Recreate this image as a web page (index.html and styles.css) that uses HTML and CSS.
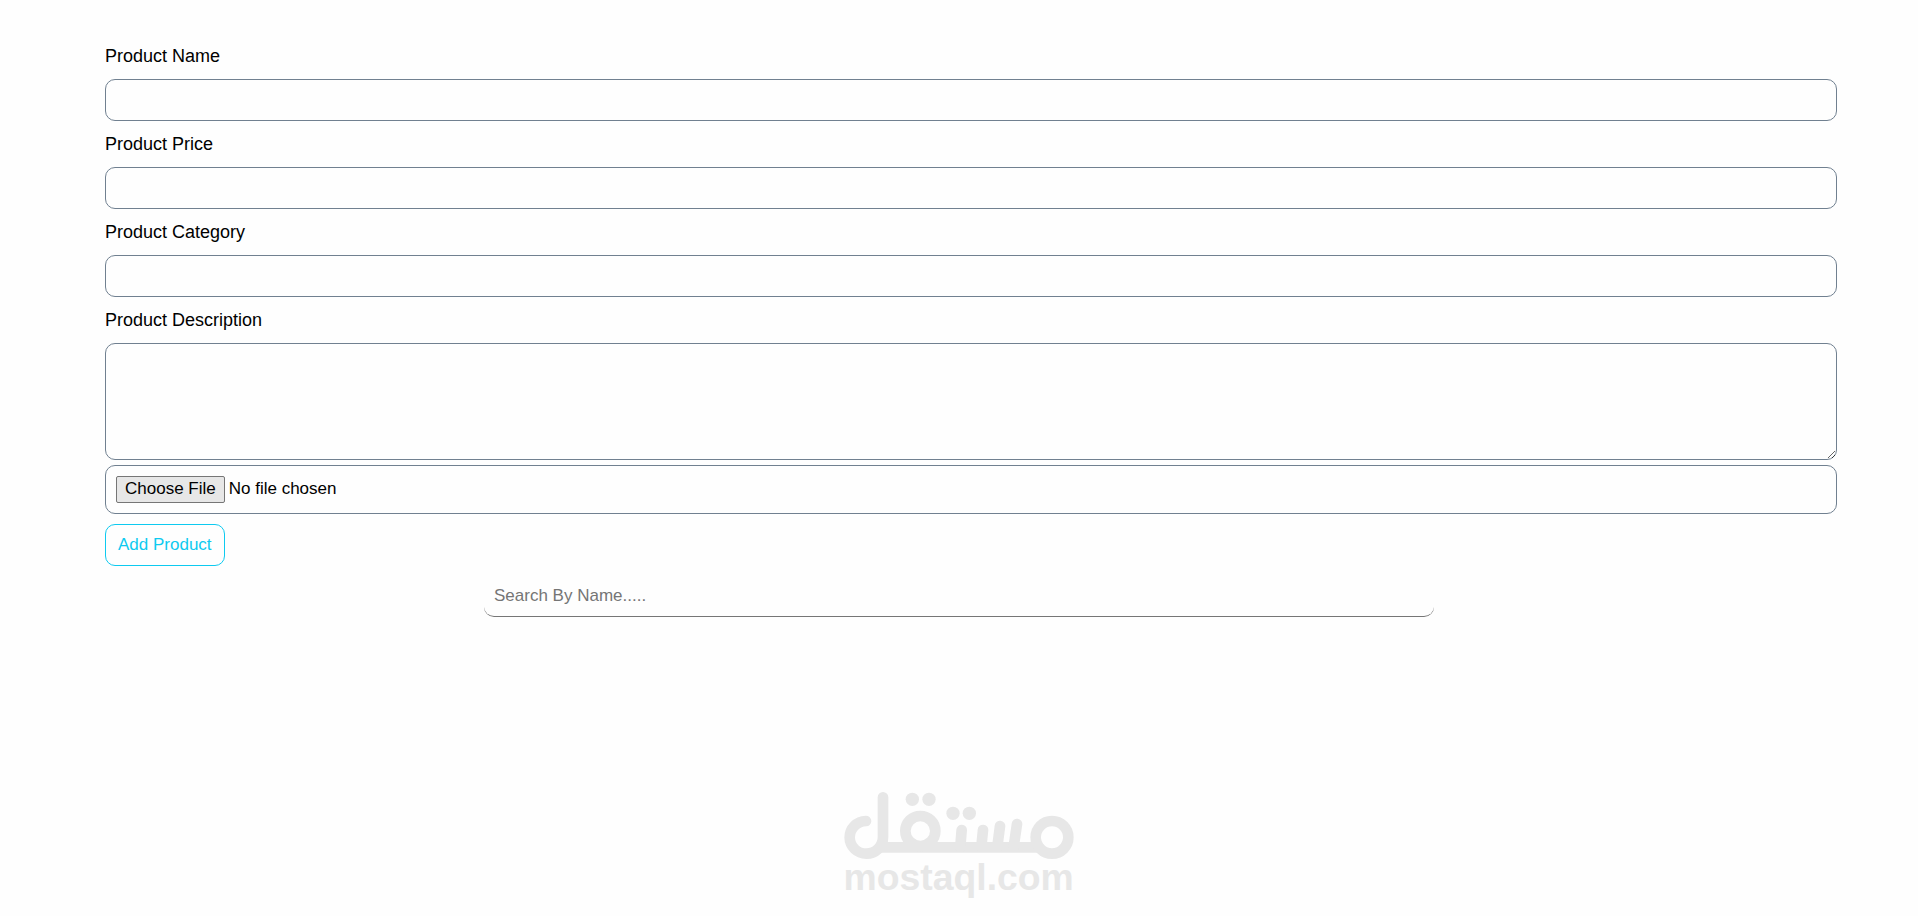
FILE: index.html
```html
<!DOCTYPE html>
<html lang="en">
<head>
    <meta charset="UTF-8">
    <meta name="viewport" content="width=device-width, initial-scale=1.0">
    <title>Products</title>
    <link rel="stylesheet" href="styles.css">
</head>
<body>
    <form class="product-form">
        <label for="productName">Product Name</label>
        <input type="text" class="form-control" id="productName">

        <label for="productPrice">Product Price</label>
        <input type="text" class="form-control" id="productPrice">

        <label for="productCategory">Product Category</label>
        <input type="text" class="form-control" id="productCategory">

        <label for="productDescription">Product Description</label>
        <textarea class="form-control" id="productDescription"></textarea>

        <input type="file" class="form-control" id="productImage" aria-label="Product Image">

        <button type="button" class="btn-add">Add Product</button>
    </form>

    <input type="text" class="search" id="searchInput" placeholder="Search By Name....." aria-label="Search By Name">

    <footer class="watermark">
        <svg class="logo" viewBox="-3 0 780 390" role="img" aria-label="mostaql.com">
            <g fill="none" stroke="currentColor" stroke-width="32" stroke-linecap="round">
                <!-- lam -->
                <path d="M159 52V172A50 49 0 1 1 108 123"/>
                <!-- base line -->
                <path d="M150 202H625" stroke-linecap="butt"/>
                <circle cx="271" cy="153" r="45"/>
                <circle cx="666" cy="172" r="49"/>
                <!-- teeth -->
                <path d="M395 150L391 200M459 150L454 200M510 138L502 200M561 132L551 200"/>
            </g>
            <g fill="currentColor">
                <circle cx="247" cy="58" r="20"/>
                <circle cx="297" cy="58" r="20"/>
                <circle cx="369" cy="100" r="20"/>
                <circle cx="418" cy="100" r="20"/>
                <text class="logo-text" x="386" y="329" text-anchor="middle">mostaql.com</text>
            </g>
        </svg>
    </footer>
</body>
</html>
```
FILE: styles.css
```css
* {
    box-sizing: border-box;
}
body {
    margin: 0;
    background-color: #fefefe;
    color: #000;
    font-family: Arial, "Liberation Sans", sans-serif;
}
.product-form {
    display: flex;
    flex-direction: column;
    margin: 33px 81px 0 105px;
}
label {
    font-size: 18px;
    line-height: 22px;
    padding: 12px 0;
}
.form-control {
    display: block;
    width: 100%;
    height: 42px;
    padding: 10px;
    border: 1px solid #708090;
    border-radius: 10px;
    background-color: transparent;
    font-family: inherit;
    font-size: 17px;
}
textarea.form-control {
    height: 117px;
    margin-bottom: 5px;
    resize: vertical;
}
input[type="file"].form-control {
    height: 49px;
}
.form-control::file-selector-button {
    height: 27px;
    padding: 0 8px 2px;
    border: 1px solid #767676;
    border-radius: 2px;
    background-color: #e7e7e7;
    font-family: inherit;
    font-size: 17px;
}
.btn-add {
    align-self: flex-start;
    height: 42px;
    margin-top: 10px;
    padding: 0 12px;
    border: 1px solid #0dcaf0;
    border-radius: 10px;
    background-color: transparent;
    color: #0dcaf0;
    font-family: inherit;
    font-size: 17px;
    cursor: pointer;
}
.btn-add:hover {
    background-color: #0dcaf0;
    color: #fff;
}
.search {
    display: block;
    width: 90%;
    max-width: 950px;
    height: 42px;
    margin: 9px auto 0;
    padding: 0 10px;
    border: none;
    border-bottom: 1px solid #767676;
    border-radius: 10px;
    background-color: transparent;
    font-family: inherit;
    font-size: 17px;
}
.search::placeholder {
    color: #757575;
}
.search:focus {
    outline: none;
}
.watermark {
    display: flex;
    justify-content: center;
    margin-top: 163px;
    color: #e7e7e7;
}
.logo {
    width: 260px;
    height: 130px;
}
.logo-text {
    font-size: 112px;
    font-weight: bold;
}
```
